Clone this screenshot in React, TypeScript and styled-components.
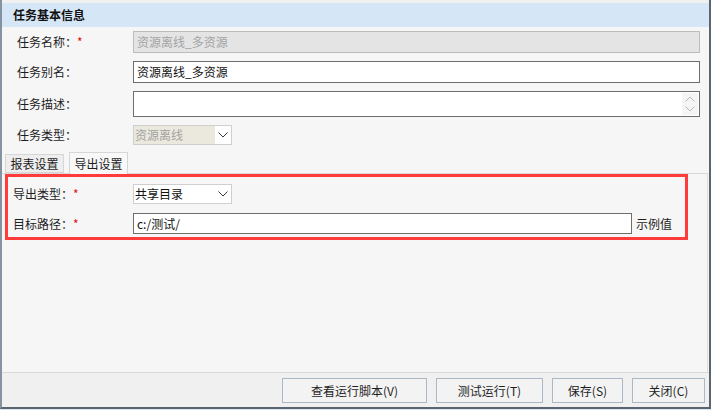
import React from "react";
import styled, { createGlobalStyle } from "styled-components";

const Global = createGlobalStyle`
  html, body { margin: 0; padding: 0; background: #d7e6f5; }
  body {
    font-family: "Noto Sans CJK SC", "Noto Sans", sans-serif;
    font-size: 12px;
    color: #1e1e1e;
  }
  * { box-sizing: border-box; }
`;

const Window = styled.div`
  width: 711px;
  height: 409px;
  display: flex;
  flex-direction: column;
  background: #f0f0f0;
  border-left: 2px solid #8592a0;
  border-right: 2px solid #5a6570;
  border-bottom: 2px solid #5a6570;
  padding-top: 3px;
  overflow: hidden;
`;

const Header = styled.div`
  height: 24px;
  line-height: 24px;
  padding-left: 11px;
  background: #d5e6f6;
  font-weight: bold;
  color: #111;
`;

const Body = styled.div`
  flex: 1;
  display: flex;
  flex-direction: column;
  background: #f6f6f6;
`;

const Form = styled.div`
  display: grid;
  grid-template-columns: 116px 1fr;
  row-gap: 8px;
  align-items: center;
  padding: 4px 9px 0 15px;
`;

const Label = styled.div`
  line-height: 16px;
  white-space: nowrap;
  color: #1e1e1e;
`;

const Star = styled.span`
  color: #e01010;
`;

const Field = styled.div<{ $disabled?: boolean; $h?: number; $w?: number }>`
  position: relative;
  height: ${(p) => p.$h ?? 22}px;
  width: ${(p) => (p.$w ? `${p.$w}px` : "auto")};
  display: flex;
  align-items: center;
  padding-left: 3px;
  background: ${(p) => (p.$disabled ? "#e4e4e4" : "#ffffff")};
  border: 1px solid ${(p) => (p.$disabled ? "#bcbcbc" : "#6e6e6e")};
  color: ${(p) => (p.$disabled ? "#a3a3a3" : "#111")};
  line-height: 16px;
  white-space: nowrap;
`;

const Spinner = styled.div`
  position: absolute;
  right: 1px;
  top: 1px;
  bottom: 1px;
  width: 16px;
  background: #f5f5f5;
  display: flex;
  flex-direction: column;
  align-items: center;
  justify-content: center;
  gap: 4px;
`;

const Select = styled.div`
  width: 99px;
  height: 20px;
  display: flex;
  border: 1px solid #cfcfcf;
  background: #ffffff;
`;

const SelectText = styled.div<{ $disabled?: boolean }>`
  flex: 1;
  display: flex;
  align-items: center;
  padding-left: 1px;
  background: ${(p) => (p.$disabled ? "#ebe9dd" : "#ffffff")};
  color: ${(p) => (p.$disabled ? "#a3a3a3" : "#111")};
  line-height: 16px;
  white-space: nowrap;
`;

const SelectArrow = styled.div`
  width: 16px;
  display: flex;
  align-items: center;
  justify-content: center;
  background: #ffffff;
`;

const TabBar = styled.div`
  margin-top: 7px;
  height: 22px;
  display: flex;
  align-items: flex-end;
  gap: 5px;
  padding-left: 3px;
  border-bottom: 1px solid #d9d9d9;
  margin-right: 1px;
`;

const Tab = styled.div<{ $active?: boolean }>`
  width: 59px;
  height: ${(p) => (p.$active ? 22 : 19)}px;
  margin-bottom: ${(p) => (p.$active ? -1 : 0)}px;
  display: flex;
  align-items: center;
  justify-content: center;
  line-height: 16px;
  background: ${(p) => (p.$active ? "#f8f8f8" : "#eeeeee")};
  border: 1px solid #d6d6d6;
  border-bottom: ${(p) => (p.$active ? "none" : "1px solid #d6d6d6")};
  color: #1e1e1e;
`;

const TabPanel = styled.div`
  flex: 1;
  margin-right: 1px;
  border-right: 1px solid #dcdcdc;
`;

const RedBox = styled.div`
  margin-left: 3px;
  width: 683px;
  border: 3px solid #ff3b3b;
  padding: 7px 0 3px 5px;
  display: grid;
  grid-template-columns: 120px auto 1fr;
  row-gap: 9px;
  align-items: center;
`;

const Hint = styled.div`
  padding-left: 4px;
  line-height: 16px;
  color: #1e1e1e;
  white-space: nowrap;
`;

const Footer = styled.div`
  height: 35px;
  border-top: 1px solid #dadada;
  background: #f0f0f0;
  display: flex;
  justify-content: flex-end;
  align-items: flex-start;
  gap: 9px;
  padding: 5px 4px 0 0;
`;

const Button = styled.div<{ $w: number }>`
  width: ${(p) => p.$w}px;
  height: 25px;
  display: flex;
  align-items: center;
  justify-content: center;
  border: 1px solid #abb8c6;
  background: #f3f3f3;
  color: #1e1e1e;
  line-height: 16px;
  white-space: nowrap;
`;

const Chevron = ({ color = "#3a3a3a", up = false }: { color?: string; up?: boolean }) => (
  <svg width="10" height="6" viewBox="0 0 10 6">
    <polyline
      points={up ? "0.5,5.5 5,1 9.5,5.5" : "0.5,0.5 5,5 9.5,0.5"}
      fill="none"
      stroke={color}
      strokeWidth="1"
    />
  </svg>
);

export default function App() {
  return (
    <>
      <Global />
      <Window>
        <Header>任务基本信息</Header>
        <Body>
          <Form>
            <Label>
              任务名称：<Star>*</Star>
            </Label>
            <Field $disabled>资源离线_多资源</Field>

            <Label>任务别名：</Label>
            <Field>资源离线_多资源</Field>

            <Label>任务描述：</Label>
            <Field $h={26}>
              <Spinner>
                <Chevron up color="#b8b8b8" />
                <Chevron color="#b8b8b8" />
              </Spinner>
            </Field>

            <Label>任务类型：</Label>
            <Select>
              <SelectText $disabled>资源离线</SelectText>
              <SelectArrow>
                <Chevron />
              </SelectArrow>
            </Select>
          </Form>

          <TabBar>
            <Tab>报表设置</Tab>
            <Tab $active>导出设置</Tab>
          </TabBar>

          <TabPanel>
            <RedBox>
              <Label>
                导出类型：<Star>*</Star>
              </Label>
              <Select>
                <SelectText>共享目录</SelectText>
                <SelectArrow>
                  <Chevron />
                </SelectArrow>
              </Select>
              <div />

              <Label>
                目标路径：<Star>*</Star>
              </Label>
              <Field $h={21} $w={499}>c:/测试/</Field>
              <Hint>示例值</Hint>
            </RedBox>
          </TabPanel>
        </Body>
        <Footer>
          <Button $w={145}>查看运行脚本(V)</Button>
          <Button $w={107}>测试运行(T)</Button>
          <Button $w={71}>保存(S)</Button>
          <Button $w={73}>关闭(C)</Button>
        </Footer>
      </Window>
    </>
  );
}
